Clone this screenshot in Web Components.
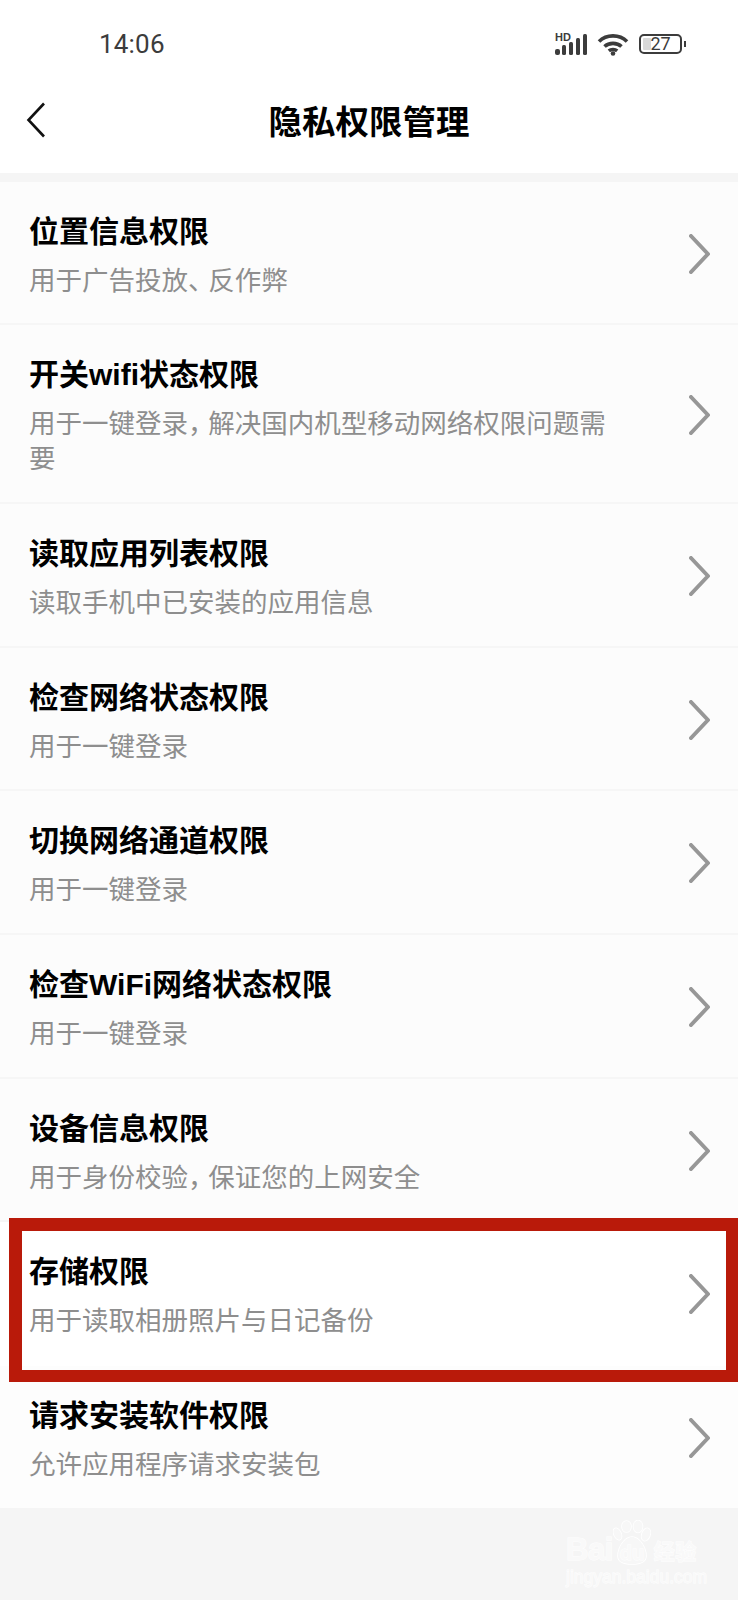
<!DOCTYPE html>
<html lang="zh">
<head>
<meta charset="utf-8">
<title>隐私权限管理</title>
<style>
    html, body{
        margin: 0;
        padding: 0;
        background-color: #f5f5f5;
        font-family: "Noto Sans CJK SC", "Noto Sans", sans-serif;
    }
    body{
        position: relative;
        width: 738px;
        height: 1600px;
        overflow: hidden;
    }
    /* the source phone draws these marks narrower than a full em */
    .narrow-mark{
        font-feature-settings: "halt";
        padding-right: 7px;
    }
</style>
</head>
<body>

<status-bar time="14:06" battery="27"></status-bar>
<nav-bar>隐私权限管理</nav-bar>

<perm-list>
    <perm-row heading="位置信息权限">用于广告投放<span class="narrow-mark">、</span>反作弊</perm-row>
    <perm-row heading="开关wifi状态权限">用于一键登录<span class="narrow-mark">，</span>解决国内机型移动网络权限问题需<br>要</perm-row>
    <perm-row heading="读取应用列表权限">读取手机中已安装的应用信息</perm-row>
    <perm-row heading="检查网络状态权限">用于一键登录</perm-row>
    <perm-row heading="切换网络通道权限">用于一键登录</perm-row>
    <perm-row heading="检查WiFi网络状态权限">用于一键登录</perm-row>
    <perm-row heading="设备信息权限">用于身份校验<span class="narrow-mark">，</span>保证您的上网安全</perm-row>
    <perm-row heading="存储权限" highlight>用于读取相册照片与日记备份</perm-row>
    <perm-row heading="请求安装软件权限" last>允许应用程序请求安装包</perm-row>
</perm-list>

<baidu-mark></baidu-mark>

<script>
class StatusBar extends HTMLElement{

    constructor(){
        super();

        this.attachShadow({mode: 'open'}).innerHTML = `
            <style>
                :host{
                    display: flex;
                    align-items: center;
                    justify-content: space-between;
                    box-sizing: border-box;
                    height: 78px;
                    padding: 10px 52px 0 99px;
                    background-color: #fff;
                    color: #3c3c3c;
                }
                .time{
                    font: 400 26px Roboto, sans-serif;
                    letter-spacing: .2px;
                }
                .icons{
                    display: flex;
                    align-items: center;
                }
                .signal{
                    position: relative;
                    width: 33px;
                    height: 21px;
                    margin-right: 9px;
                }
                .signal svg{ display: block; }
                .hd{
                    position: absolute;
                    left: 0;
                    top: -2px;
                    font: 700 11px/10px "Liberation Sans", sans-serif;
                }
                .wifi{
                    display: block;
                    margin-right: 10px;
                }
                .battery{
                    position: relative;
                    box-sizing: border-box;
                    width: 43px;
                    height: 20px;
                    border: 2px solid #3c3c3c;
                    border-radius: 5px;
                    display: flex;
                    align-items: center;
                    justify-content: center;
                    font: 400 18px/18px "Roboto", sans-serif;
                    margin-right: 4px;
                }
                .battery::before{
                    content: "";
                    position: absolute;
                    left: 2px;
                    top: 2px;
                    bottom: 2px;
                    width: 8px;
                    background-color: #d9d9d9;
                    border-radius: 1px;
                }
                .battery::after{
                    content: "";
                    position: absolute;
                    right: -6px;
                    top: 5px;
                    width: 2px;
                    height: 6px;
                    background-color: #3c3c3c;
                }
                .battery span{ position: relative; }
            </style>
            <span class="time"></span>
            <div class="icons">
                <div class="signal">
                    <span class="hd">HD</span>
                    <svg width="33" height="21" viewBox="0 0 33 21" fill="#3c3c3c">
                        <rect x="0" y="15" width="5" height="6" rx="2"/>
                        <rect x="7" y="11" width="4" height="10" rx="1.5"/>
                        <rect x="14" y="8" width="4" height="13" rx="1.5"/>
                        <rect x="21" y="4" width="4" height="17" rx="1.5"/>
                        <rect x="28" y="0" width="4" height="21" rx="1.5"/>
                    </svg>
                </div>
                <svg class="wifi" width="32" height="23" viewBox="0 0 32 23" fill="none" stroke="#3c3c3c" stroke-width="3.6">
                    <path d="M2 8.5C9.5 1 22.500 1 30 8.500"/>
                    <path d="M7.500 13.500C12 9.300 20 9.300 24.500 13.500"/>
                    <path d="M11.800 17.800C14 16 18 16 20.200 17.800"/>
                    <circle cx="16" cy="20.500" r="2.300" fill="#3c3c3c" stroke="none"/>
                </svg>
                <div class="battery"><span></span></div>
            </div>
        `;

    }

    connectedCallback(){
        this.shadowRoot.querySelector('.time').textContent = this.getAttribute('time');
        this.shadowRoot.querySelector('.battery span').textContent = this.getAttribute('battery');
    }

}

class NavBar extends HTMLElement{

    constructor(){
        super();

        this.attachShadow({mode: 'open'}).innerHTML = `
            <style>
                :host{
                    display: flex;
                    position: relative;
                    align-items: center;
                    justify-content: center;
                    box-sizing: border-box;
                    height: 95px;
                    padding-bottom: 13px;
                    background-color: #fff;
                    color: #000;
                    font-size: 33.500px;
                    font-weight: 700;
                }
                svg{
                    position: absolute;
                    left: 26px;
                    top: 24px;
                }
            </style>
            <svg width="20" height="36" viewBox="0 0 20 36" fill="none" stroke="#111" stroke-width="2.6">
                <path d="M18 1.500L2.500 18L18 34.500"/>
            </svg>
            <slot></slot>
        `;

    }

}

class PermList extends HTMLElement{

    constructor(){
        super();

        this.attachShadow({mode: 'open'}).innerHTML = `
            <style>
                :host{
                    display: block;
                    margin-top: 8.5px;
                }
            </style>
            <slot></slot>
        `;

    }

}

class PermRow extends HTMLElement{

    constructor(){
        super();

        this.attachShadow({mode: 'open'}).innerHTML = `
            <style>
                :host{
                    display: flex;
                    position: relative;
                    align-items: center;
                    box-sizing: border-box;
                    padding: 30px 28px 27.7px 29px;
                    background-color: #fcfcfc;
                    border-bottom: 2px solid #f6f6f6;
                }
                :host([last]){
                    background-color: #fdfdfd;
                    border-bottom: 0;
                    padding-bottom: 27.5px;
                }
                :host([highlight]){
                    background-color: #fff;
                    border-bottom-color: #fff;
                }
                .text{
                    width: 592px;
                    margin-right: auto;
                }
                .heading{
                    font-family: "Liberation Sans", "Noto Sans CJK SC", sans-serif;
                    font-size: 30px;
                    line-height: 40px;
                    font-weight: 700;
                    color: #000;
                }
                .sub{
                    margin-top: 9px;
                    font-size: 26.500px;
                    line-height: 35px;
                    color: #8e8e8e;
                }
                svg{
                    display: block;
                    flex: none;
                }
                .frame{
                    display: none;
                    position: absolute;
                    left: 9px;
                    right: 0;
                    top: -4px;
                    height: 164px;
                    box-sizing: border-box;
                    border: solid #b91a0a;
                    border-width: 13px 12px 12px 13px;
                    z-index: 2;
                    pointer-events: none;
                }
                :host([highlight]) .frame{ display: block; }
            </style>
            <div class="text">
                <div class="heading"></div>
                <div class="sub"><slot></slot></div>
            </div>
            <svg width="21" height="40" viewBox="0 0 21 40" fill="none" stroke="#979797" stroke-width="4" stroke-linecap="round" stroke-linejoin="round">
                <path d="M2 2L19 20L2 38"/>
            </svg>
            <div class="frame"></div>
        `;

    }

    connectedCallback(){
        this.shadowRoot.querySelector('.heading').textContent = this.getAttribute('heading');
    }

}

class BaiduMark extends HTMLElement{

    constructor(){
        super();

        this.attachShadow({mode: 'open'}).innerHTML = `
            <style>
                :host{
                    display: block;
                    position: absolute;
                    left: 566px;
                    top: 1518px;
                    width: 134px;
                    color: #f9f9f9;
                    -webkit-text-stroke: 1px #fff;
                    paint-order: stroke fill;
                }
                .top{
                    display: flex;
                    align-items: flex-end;
                    height: 47px;
                }
                .bai{
                    font: 700 31px/30px "Liberation Sans", sans-serif;
                    letter-spacing: -.5px;
                }
                .paw{
                    position: relative;
                    width: 38px;
                    height: 45px;
                    flex: none;
                }
                .paw svg{ display: block; }
                .du{
                    position: absolute;
                    left: 7px;
                    bottom: 0;
                    font: 700 20px/24px "Liberation Sans", sans-serif;
                }
                .jing{
                    font: 700 21px/30px "Noto Sans CJK SC", sans-serif;
                    margin-left: 3px;
                    letter-spacing: .5px;
                }
                .url{
                    font: 400 17.500px/20px "Liberation Sans", sans-serif;
                    -webkit-text-stroke: .9px #fff;
                    margin-top: 2px;
                    white-space: nowrap;
                }
            </style>
            <div class="top">
                <span class="bai">Bai</span>
                <div class="paw">
                    <svg width="38" height="45" viewBox="0 0 38 45" fill="#f7f7f7" stroke="#fff" stroke-width="1.6">
                        <ellipse cx="4.500" cy="14" rx="3.500" ry="6" transform="rotate(-25 4.500 14)"/>
                        <ellipse cx="13.500" cy="6.500" rx="4.500" ry="5.500"/>
                        <ellipse cx="25" cy="6.500" rx="4.500" ry="6"/>
                        <ellipse cx="33" cy="14.500" rx="4" ry="6.500" transform="rotate(20 33 14.500)"/>
                        <path d="M19 17C26 17 33 27 33 36C33 42 27 44 19 44C11 44 5 42 5 36C5 27 12 17 19 17Z"/>
                    </svg>
                    <span class="du">du</span>
                </div>
                <span class="jing">经验</span>
            </div>
            <div class="url">jingyan.baidu.com</div>
        `;

    }

}

window.customElements.define('status-bar', StatusBar);
window.customElements.define('nav-bar', NavBar);
window.customElements.define('perm-list', PermList);
window.customElements.define('perm-row', PermRow);
window.customElements.define('baidu-mark', BaiduMark);
</script>
</body>
</html>
